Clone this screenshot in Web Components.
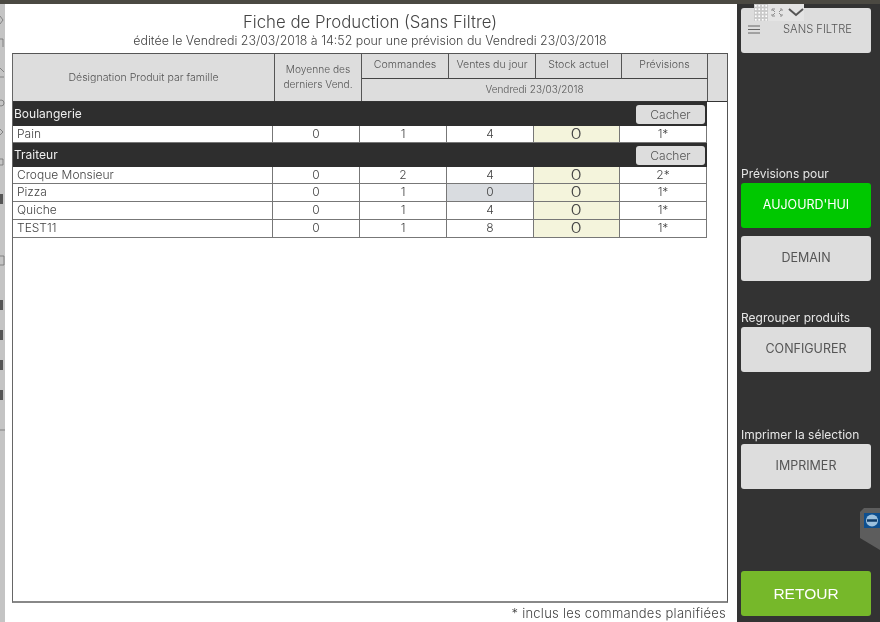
<!DOCTYPE html>
<html lang="fr"><head><meta charset="utf-8"><title>Fiche de Production</title>
<style>html,body{margin:0;padding:0;width:880px;height:622px;overflow:hidden;background:#333}</style></head>
<body>
<app-shell>
  <prod-sheet>
    <prod-header></prod-header>
    <fam-row name="Boulangerie"></fam-row>
    <prod-row v="Pain|0|1|4|0|1*" style="height:17px"></prod-row>
    <fam-row name="Traiteur"></fam-row>
    <prod-row v="Croque Monsieur|0|2|4|0|2*" style="height:17px"></prod-row>
    <prod-row v="Pizza|0|1|0|0|1*" zero></prod-row>
    <prod-row v="Quiche|0|1|4|0|1*"></prod-row>
    <prod-row v="TEST11|0|1|8|0|1*"></prod-row>
  </prod-sheet>
  <side-bar slot="side">
    <side-btn icon style="margin-top:8px">SANS FILTRE</side-btn>
    <side-label style="margin-top:111px">Prévisions pour</side-label>
    <side-btn kind="on">AUJOURD'HUI</side-btn>
    <side-btn style="margin-top:8px">DEMAIN</side-btn>
    <side-label style="margin-top:27px">Regrouper produits</side-label>
    <side-btn>CONFIGURER</side-btn>
    <side-label style="margin-top:53px">Imprimer la sélection</side-label>
    <side-btn>IMPRIMER</side-btn>
    <side-btn kind="back" style="margin-top:82px">RETOUR</side-btn>
  </side-bar>
</app-shell>
<script>
const FONT='Inter,"Liberation Sans",sans-serif';
function def(name,html,init){customElements.define(name,class extends HTMLElement{
  constructor(){super();this.attachShadow({mode:'open'}).innerHTML=html}
  connectedCallback(){if(init)init(this)}
})}
def('app-shell',`<style>
:host{display:block;width:880px;height:622px;position:relative;overflow:hidden;background:#333;font-family:${FONT};filter:blur(.3px)}
.top{height:4px;background:#4b4942}
.main{display:flex;height:618px}
.strip{width:5px;background:#c4c4c4;flex:none}
.strip svg{display:block}
.panel{width:732px;background:#fff;flex:none;display:flex;flex-direction:column;min-width:0}
.side{flex:1;min-width:0}
h1{margin:0;padding-top:8px;height:20px;font:300 16.8px/20px ${FONT};color:#444;text-align:center;width:730px}
.sub{height:21px;font:300 12.4px/18px ${FONT};color:#444;text-align:center;width:730px;white-space:nowrap}
.box{margin-left:7px;width:714px;height:547px;border:1px solid #555;border-left:1px solid #666;border-bottom:2px solid #888;background:#fff;box-sizing:content-box}
.note{padding:3px 11px 0 0;text-align:right;font:300 13px/15px ${FONT};color:#444;letter-spacing:.25px}
.widget{position:absolute;left:754px;top:4px;width:50px;height:17px;background:#e4e4e4;display:flex}
.grip{width:14px;height:17px;background:#c9c9c9;background-image:radial-gradient(#fff 1px,transparent 1.2px);background-size:3.5px 3.5px}
.tv{position:absolute;left:860px;top:508px}
</style>
<div class="top"></div>
<div class="main">
 <div class="strip"><svg width="5" height="618" fill="none" stroke="#666" stroke-width="1">
  <path d="M0 12l3 4-3 4M0 35h3v8M0 64l4 4M0 73h4" opacity=".7"/>
  <circle cx="1" cy="99" r="3" opacity=".7"/><path d="M0 125l3 3-3 3M0 155h3v6h-3M0 252h4v9H0" opacity=".7"/>
  <path d="M0 190h3v10H0zM0 296h3v10H0zM0 326h3v10H0zM0 356h3v10H0zM0 386h3v10H0z" fill="#555" stroke="none"/>
  <path d="M0 426h5" opacity=".7"/>
 </svg></div>
 <div class="panel">
  <h1>Fiche de Production (Sans Filtre)</h1>
  <div class="sub">éditée le Vendredi 23/03/2018 à 14:52 pour une prévision du Vendredi 23/03/2018</div>
  <div class="box"><slot></slot></div>
  <div class="note">* inclus les commandes planifiées</div>
 </div>
 <div class="side"><slot name="side"></slot></div>
</div>
<div class="widget"><div class="grip"></div>
 <svg width="36" height="17" fill="none" stroke="#777"><path d="M4 7V5h3M12 5h2v2M4 10v2h3M14 10v2h-2M5 6l2 2M13 6l-2 2M5 11l2-2M13 11l-2-2" stroke-width=".8"/><path d="M21 5l7 6 7-6" stroke="#555" stroke-width="2"/></svg></div>
<svg class="tv" width="20" height="42"><path d="M20 0H4L0 4V30L20 42z" fill="#5d5d5d"/><rect x="4" y="5" width="16" height="15" fill="#0e4f8f"/><circle cx="12" cy="12.5" r="6" fill="#9cc0dd"/><path d="M7 12.5h10" stroke="#0e3a66" stroke-width="2.5"/></svg>`);

const GRID='display:grid;grid-template-columns:260px 87px 87px 87px 86px 87px;grid-template-rows:minmax(0,1fr)';
def('prod-header',`<style>
:host{display:grid;grid-template-columns:262px 87px 87px 87px 86px 86px 1fr;grid-template-rows:25px 22px;height:47px;background:#ddd;color:#555;font:300 10.6px/15px ${FONT};border-bottom:1px solid #333;box-sizing:content-box}
div{display:flex;align-items:center;justify-content:center;text-align:center;border-right:1px solid #555;box-sizing:border-box}
.a{grid-column:1;grid-row:1/3}.b{grid-column:2;grid-row:1/3;font-size:10.2px;padding-bottom:1px}
.e{grid-column:7;grid-row:1/3;border:0}
.d{grid-column:3/7;grid-row:2;font-size:10px;padding-bottom:1px}
.t{grid-row:1;border-bottom:1px solid #444;padding-bottom:3px}
</style><div class="a">Désignation Produit par famille</div><div class="b">Moyenne des<br>derniers Vend.</div>
<div class="t">Commandes</div><div class="t">Ventes du jour</div><div class="t">Stock actuel</div><div class="t">Prévisions</div><div class="e"></div><div class="d">Vendredi 23/03/2018</div>`);

def('fam-row',`<style>
:host{display:flex;align-items:center;justify-content:space-between;width:694px;height:24px;background:#2e2e2e;color:#eee;font:400 12px/24px ${FONT};box-sizing:border-box;padding:0 2px 0 1px}
button{all:unset;width:69px;height:19px;background:#ddd;border-radius:3px;color:#555;font:300 12px/19px ${FONT};text-align:center}
</style><span id="n"></span><button>Cacher</button>`,el=>{el.shadowRoot.getElementById('n').textContent=el.getAttribute('name')});

def('prod-row',`<style>
:host{${GRID};width:694px;height:18px;box-sizing:border-box;background:#fff;color:#444;font:300 12px/16px ${FONT};border-bottom:1px solid #777}
div{text-align:center;border-right:1px solid #777;box-sizing:border-box}
.n{text-align:left;padding-left:4px}
.s{background:#f4f4dc;font-size:13px;line-height:16px}
.s span{display:inline-block;transform:scale(1.4,1.1);vertical-align:top}
.z{background:#d9dce0}
</style><div class="n"></div><div></div><div></div><div class="v"></div><div class="s"></div><div class="l"></div>`,el=>{
  const c=el.shadowRoot.querySelectorAll('div');el.getAttribute('v').split('|').forEach((t,i)=>{
    if(i==4){const s=document.createElement('span');s.textContent=t;c[i].append(s)}else c[i].textContent=t});
  if(el.hasAttribute('zero'))c[3].classList.add('z');
});

def('side-bar',`<style>:host{display:flex;flex-direction:column;align-items:flex-start;padding-left:4px;height:618px;margin-top:-4px;box-sizing:border-box}</style><slot></slot>`);
def('side-label',`<style>:host{display:block;height:19px;color:#e6e6e6;font:400 12px/19px ${FONT};white-space:nowrap}</style><slot></slot>`);
def('side-btn',`<style>
:host{display:flex;align-items:center;justify-content:center;position:relative;width:130px;height:45px;flex:none;background:#ddd;color:#555;border-radius:3px;font:400 12.5px/1 ${FONT}}
:host([kind=on]){background:#00c800;color:#fff}
:host([kind=back]){background:#76b82a;color:#fff;font:400 15.5px/1 "Liberation Sans",sans-serif}
:host([icon]){font-weight:300;font-size:11.2px;padding:0 0 2px 23px;box-sizing:border-box}
svg{display:none;position:absolute;left:7px;top:17px}
:host([icon]) svg{display:block}
</style><svg width="13" height="9" stroke="#666"><path d="M0 1h12M0 4.5h12M0 8h12"/></svg><slot></slot>`);
def('prod-sheet',`<style>:host{display:block}</style><slot></slot>`);
</script>
</body></html>
